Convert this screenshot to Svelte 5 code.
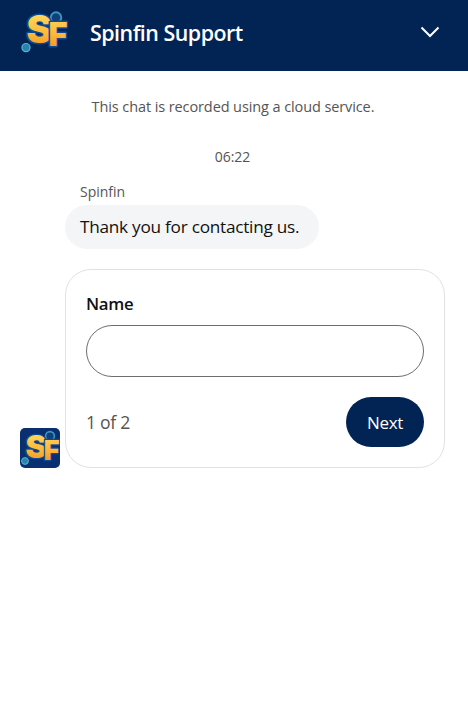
<script>
  const title = 'Spinfin Support';
</script>

{#snippet logo(id, size)}
  <svg class="logo" width={size} height={size} viewBox="0 0 40 40" aria-hidden="true">
    <defs>
      <linearGradient id={id} x1="0" y1="0" x2="0" y2="1">
        <stop offset="0" stop-color="#ffe36b" />
        <stop offset="0.55" stop-color="#fdbb3a" />
        <stop offset="1" stop-color="#f28a1c" />
      </linearGradient>
    </defs>
    <circle cx="30" cy="8" r="4.4" fill="#123f7c" stroke="#3a97bd" stroke-width="1.6" />
    <circle cx="5" cy="33" r="3.4" fill="#2a83ad" stroke="#55b4d6" stroke-width="1" />
    <text x="5.5" y="29.5" class="sf" fill="url(#{id})" font-size="32">S<tspan dx="-3" dy="2" font-size="27">F</tspan></text>
  </svg>
{/snippet}

<div class="page">
  <header class="header">
    <div class="brand">
      {@render logo('grad-head', 48)}
      <h1>{title}</h1>
    </div>
    <svg class="chev" width="20" height="12" viewBox="0 0 20 12" aria-hidden="true">
      <path d="M1.5 1.5 L10 10 L18.5 1.5" fill="none" stroke="#fff" stroke-width="2" />
    </svg>
  </header>

  <main class="chat">
    <p class="notice">This chat is recorded using a cloud service.</p>
    <p class="time">06:22</p>
    <div class="thread">
      <div class="avatar">{@render logo('grad-av', 40)}</div>
      <div class="messages">
        <div class="sender">Spinfin</div>
        <div class="bubble">Thank you for contacting us.</div>
        <form class="card" onsubmit={(e) => e.preventDefault()}>
          <label class="label" for="name">Name</label>
          <input id="name" class="input" type="text" />
          <div class="footer">
            <span class="step">1 of 2</span>
            <button class="next" type="submit">Next</button>
          </div>
        </form>
      </div>
    </div>
  </main>
</div>

<style>
  :global(body) {
    margin: 0;
    background: #fff;
    font-family: "Open Sans", "Noto Sans", sans-serif;
  }
  .page {
    width: 468px;
    min-height: 707px;
  }
  .header {
    height: 71px;
    background: #022454;
    display: flex;
    align-items: center;
    justify-content: space-between;
    padding: 0 28px 7px 20px;
    box-sizing: border-box;
  }
  .brand {
    display: flex;
    align-items: center;
    gap: 22px;
  }
  .logo {
    display: block;
    overflow: visible;
  }
  .brand .logo {
    margin-bottom: 1px;
  }
  .sf {
    font-family: "Inter", "Liberation Sans", sans-serif;
    font-weight: 900;
    stroke: #0e4a94;
    stroke-width: 2.6px;
    stroke-linejoin: round;
    paint-order: stroke;
  }
  h1 {
    margin: 0;
    color: #fff;
    font-size: 21.4px;
    font-weight: 600;
    letter-spacing: -0.5px;
  }
  .chat {
    padding-top: 26px;
  }
  .notice, .time {
    margin: 0;
    text-align: center;
    color: #555;
    line-height: 20px;
  }
  .notice {
    font-size: 14.5px;
    letter-spacing: -0.1px;
    margin-left: -2px;
  }
  .time {
    font-size: 14px;
    margin-top: 30px;
    margin-left: -3px;
  }
  .thread {
    display: flex;
    align-items: flex-end;
    gap: 5px;
    padding: 0 23px 0 20px;
    margin-top: 15px;
  }
  .avatar {
    width: 40px;
    height: 40px;
    flex: none;
    border-radius: 5px;
    background: #0a2f70;
    overflow: hidden;
  }
  .messages {
    flex: 1;
  }
  .sender {
    margin-left: 15px;
    color: #555;
    font-size: 14px;
    line-height: 20px;
  }
  .bubble {
    display: inline-block;
    margin-top: 3px;
    padding: 0 20px 0 15px;
    height: 44px;
    line-height: 44px;
    border-radius: 22px;
    background: #f4f5f6;
    color: #111;
    font-size: 17.2px;
    letter-spacing: -0.25px;
  }
  .card {
    box-sizing: border-box;
    height: 199px;
    margin-top: 20px;
    padding: 22px 20px 20px 20px;
    border: 1px solid #e2e2e2;
    border-radius: 26px;
    display: flex;
    flex-direction: column;
  }
  .label {
    font-size: 16.8px;
    font-weight: 600;
    line-height: 24px;
    color: #111;
    letter-spacing: -0.3px;
  }
  .input {
    box-sizing: border-box;
    width: 100%;
    height: 52px;
    margin-top: 9px;
    border: 1px solid #6e6e6e;
    border-radius: 26px;
    background: #fff;
    outline: none;
  }
  .footer {
    display: flex;
    align-items: center;
    justify-content: space-between;
    margin-top: 20px;
  }
  .step {
    color: #555;
    font-size: 17.6px;
    letter-spacing: -0.3px;
  }
  .next {
    width: 78px;
    height: 50px;
    border: none;
    border-radius: 25px;
    background: #022454;
    color: #fff;
    font-family: inherit;
    font-size: 17px;
    letter-spacing: -0.3px;
  }
</style>
